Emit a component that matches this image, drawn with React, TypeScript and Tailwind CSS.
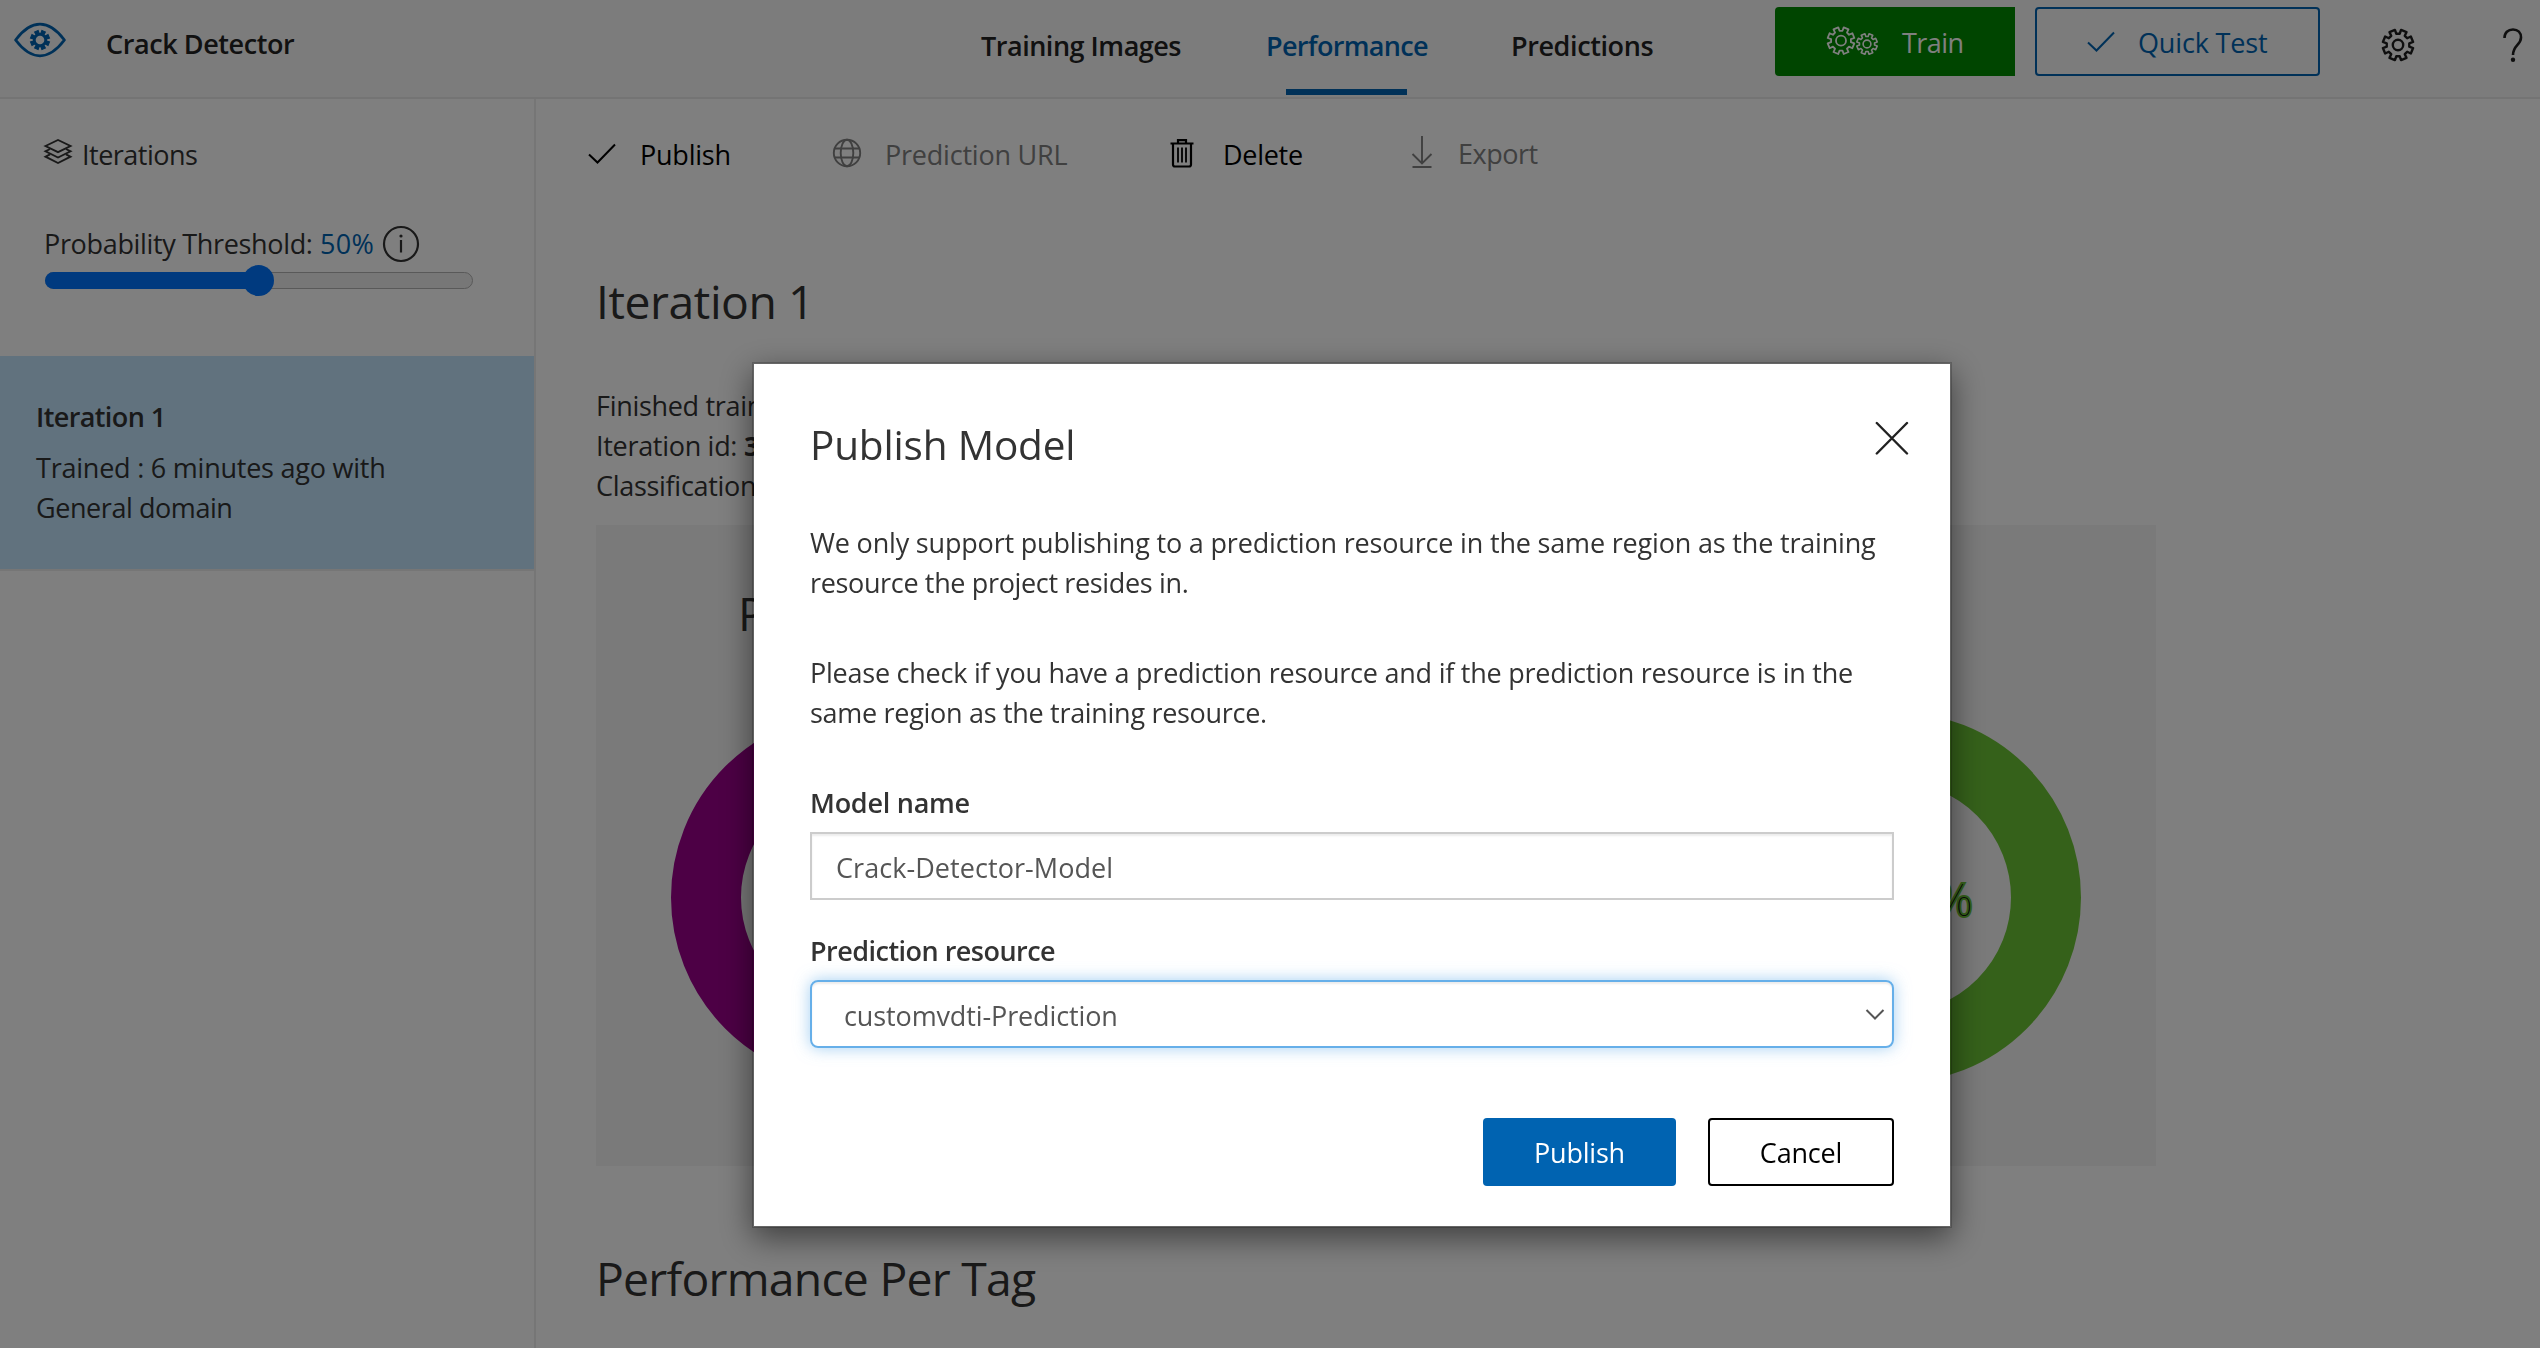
import React from "react";

/** Outline of an eight-toothed gear centred on (cx, cy), with a notch at the top. */
function gearPath(cx: number, cy: number, outer: number, inner: number) {
  const points: string[] = [];
  for (let i = 0; i < 8; i++) {
    const mid = i * 45 + 22.5;
    const corners: [number, number][] = [
      [mid - 14, inner],
      [mid - 11, outer],
      [mid + 11, outer],
      [mid + 14, inner],
    ];
    corners.forEach(([deg, r]) => {
      const a = (deg * Math.PI) / 180;
      points.push(`${(cx + r * Math.sin(a)).toFixed(2)} ${(cy - r * Math.cos(a)).toFixed(2)}`);
    });
  }
  return `M${points.join("L")}Z`;
}

function EyeLogo() {
  return (
    <svg width="52" height="36" viewBox="0 0 52 36" fill="none" stroke="#0063b1">
      <path d="M1.600 18C8 9.500 16 2.200 26 2.200S44 9.500 50.400 18C44 26.500 36 33.800 26 33.800S8 26.500 1.600 18Z" strokeWidth="2.800" strokeLinejoin="round" />
      <path d={gearPath(26, 18, 9.6, 6.6)} strokeWidth="1.200" fill="#0063b1" />
      <circle cx="26" cy="18" r="4.300" fill="#f8f8f8" stroke="none" />
    </svg>
  );
}

function GearsIcon() {
  return (
    <svg width="54" height="30" viewBox="0 0 54 30" fill="none" stroke="#fff" strokeWidth="1.800" strokeLinejoin="round">
      <path d={gearPath(15, 14.7, 13.6, 10)} />
      <circle cx="15" cy="14.700" r="5" />
      <path d={gearPath(41, 18, 10.4, 7.6)} strokeWidth="1.600" />
      <circle cx="41" cy="18" r="3.900" strokeWidth="1.600" />
    </svg>
  );
}

function GearIcon() {
  return (
    <svg width="34" height="34" viewBox="0 0 34 34" fill="none" stroke="#1f1f1f" strokeWidth="2.400" strokeLinejoin="round">
      <path d={gearPath(17, 17, 15.4, 11.4)} />
      <circle cx="17" cy="17" r="5.200" />
    </svg>
  );
}

function HelpIcon() {
  return (
    <svg width="22" height="36" viewBox="0 0 22 36" fill="none" stroke="#1f1f1f" strokeWidth="2.600">
      <path d="M2.500 11C2.500 5.500 6 2.500 11 2.500S19 5.500 19 10.500C19 18 11 18 11 28" />
      <circle cx="11" cy="32.800" r="2.200" fill="#1f1f1f" stroke="none" />
    </svg>
  );
}

function CheckIcon({ color }: { color: string }) {
  return (
    <svg width="30" height="22" viewBox="0 0 30 22" fill="none" stroke={color} strokeWidth="2">
      <path d="M2 11.500L10.500 19.500L28 1.500" />
    </svg>
  );
}

function LayersIcon() {
  return (
    <svg width="30" height="28" viewBox="0 0 30 28" fill="none" stroke="#333" strokeWidth="1.900">
      <path d="M2.500 8L15 2L27.500 8L15 14.200Z" />
      <path d="M7 11L2.500 13.300L15 19.500L27.500 13.300L23 11" />
      <path d="M7 16.300L2.500 18.700L15 25L27.500 18.700L23 16.300" />
    </svg>
  );
}

function InfoIcon() {
  return (
    <svg width="38" height="38" viewBox="0 0 38 38" fill="none" stroke="#333" strokeWidth="2.200">
      <circle cx="19" cy="19" r="17" />
      <path d="M19 15V27.500" />
      <circle cx="19" cy="11" r="1.600" fill="#333" stroke="none" />
    </svg>
  );
}

function GlobeIcon() {
  return (
    <svg width="30" height="30" viewBox="0 0 30 30" fill="none" stroke="#808080" strokeWidth="1.900">
      <circle cx="15" cy="15" r="13.200" />
      <ellipse cx="15" cy="15" rx="6.300" ry="13.200" />
      <path d="M3 10.500H27M3 19.500H27" />
    </svg>
  );
}

function TrashIcon() {
  return (
    <svg width="24" height="30" viewBox="0 0 24 30" fill="none" stroke="#000" strokeWidth="2.200">
      <path d="M0.500 5.500H23.500M8 5.500V2.200H16V5.500" />
      <path d="M3 5.500V26.500Q3 28.500 5 28.500H19Q21 28.500 21 26.500V5.500" />
      <path d="M8 9.500V24.500M12 9.500V24.500M16 9.500V24.500" strokeWidth="1.800" />
    </svg>
  );
}

function DownloadIcon() {
  return (
    <svg width="22" height="34" viewBox="0 0 22 34" fill="none" stroke="#808080" strokeWidth="1.900">
      <path d="M11 1V28M1.500 19L11 28.500L20.500 19M1.500 32H20.500" />
    </svg>
  );
}

function Donut({ color, value }: { color: string; value: string }) {
  return (
    <div className="relative flex h-[371px] w-[371px] items-center justify-center">
      <svg className="absolute inset-0" width="371" height="371" viewBox="0 0 371 371" fill="none">
        <circle cx="185.500" cy="185.500" r="150.500" stroke={color} strokeWidth="70" />
      </svg>
      <svg className="relative" width="220" height="70" viewBox="0 0 220 70">
        <text x="110" y="54" textAnchor="middle" className="font-['Open_Sans'] text-[47px] tracking-[-1px]" fill="#111" stroke={color} strokeWidth="1.800">
          {value}
        </text>
      </svg>
    </div>
  );
}

function Header() {
  return (
    <header className="flex h-[99px] shrink-0 items-start border-b-2 border-[#e8e8e8] bg-[#f8f8f8] font-semibold text-[#222]">
      <div className="ml-[14px] mt-[22px]">
        <EyeLogo />
      </div>
      <div className="ml-[40px] mt-[24px] w-[875px] tracking-[-0.42px]">Crack Detector</div>
      <nav className="flex pt-[26px]">
        <div className="w-[285px] tracking-[-0.48px]">Training Images</div>
        <div className="flex w-[245px] flex-col items-start text-[#0063b1]">
          <span className="tracking-[-0.66px]">Performance</span>
          <span className="ml-[20px] mt-[23px] h-[6px] w-[121px] bg-[#0063b1]" />
        </div>
        <div className="w-[264px] tracking-[-0.4px]">Predictions</div>
      </nav>
      <button className="mt-[7px] flex h-[69px] w-[240px] items-start rounded-l-[4px] bg-[#008a00] text-white">
        <span className="ml-[51px] mt-[19px]">
          <GearsIcon />
        </span>
        <span className="ml-[22px] mt-[16px] font-medium tracking-[-0.56px]">Train</span>
      </button>
      <button className="ml-[20px] mt-[7px] flex h-[69px] w-[285px] items-start rounded-[4px] border-2 border-[#0063b1] text-[#0063b1]">
        <span className="ml-[49px] mt-[22px]">
          <CheckIcon color="#0063b1" />
        </span>
        <span className="ml-[22px] mt-[14px] font-normal tracking-[-0.16px]">Quick Test</span>
      </button>
      <span className="ml-[61px] mt-[28px]">
        <GearIcon />
      </span>
      <span className="ml-[87px] mt-[27px]">
        <HelpIcon />
      </span>
    </header>
  );
}

function Sidebar() {
  return (
    <aside className="flex w-[536px] shrink-0 flex-col border-r-2 border-[#ececec]">
      <div className="ml-[43px] mt-[36px] flex h-[40px] items-start">
        <span className="mt-[3px]">
          <LayersIcon />
        </span>
        <span className="ml-[9px] tracking-[-0.5px]">Iterations</span>
      </div>
      <div className="ml-[44px] mt-[49px] flex h-[40px] items-start whitespace-pre">
        <span className="w-[276px] tracking-[-0.33px]">Probability Threshold:</span>
        <span className="w-[62px] tracking-[0.3px] text-[#0063b1]">50%</span>
        <span className="mt-[1px]">
          <InfoIcon />
        </span>
      </div>
      <div className="ml-[45px] flex h-[32px] w-[428px] items-center">
        <div className="relative flex h-[17px] w-full items-center rounded-full border border-[#b2b2b2] bg-[#efefef]">
          <div className="-ml-px h-[17px] w-1/2 rounded-l-full bg-[#0075ff]" />
          <div className="-ml-[15px] size-[31px] rounded-full bg-[#0075ff]" />
        </div>
      </div>
      <div className="mt-[60px] flex h-[215px] flex-col border-b-2 border-[#ececec] bg-[#c2e4fc] pl-[36px] pt-[41px]">
        <div className="font-semibold tracking-[-0.6px]">Iteration 1</div>
        <div className="mt-[11px] tracking-[-0.23px]">Trained : 6 minutes ago with</div>
        <div className="tracking-[-0.43px]">General domain</div>
      </div>
    </aside>
  );
}

function Content() {
  return (
    <main className="flex flex-1 flex-col pl-[60px]">
      <div className="-ml-[9px] mt-[36px] flex h-[40px] w-full items-start">
        <span className="mt-[8px]">
          <CheckIcon color="#000" />
        </span>
        <span className="ml-[23px] w-[192px] tracking-[-0.23px] text-black">Publish</span>
        <span className="mt-[3px]">
          <GlobeIcon />
        </span>
        <span className="ml-[23px] w-[285px] tracking-[-0.22px] text-[#808080]">Prediction URL</span>
        <span className="mt-[3px]">
          <TrashIcon />
        </span>
        <span className="ml-[29px] w-[188px] tracking-[-0.28px] text-black">Delete</span>
        <DownloadIcon />
        <span className="-mt-px ml-[25px] tracking-[-0.5px] text-[#808080]">Export</span>
      </div>
      <h1 className="mt-[93px] text-[46.3px] leading-[68px] tracking-[-0.45px]">Iteration 1</h1>
      <div className="mt-[50px] tracking-[-0.3px]">
        <div>Finished training</div>
        <div>
          Iteration id: <span className="font-bold">3</span>
        </div>
        <div>Classification type</div>
      </div>
      <section className="mt-[19px] flex h-[641px] w-[1560px] flex-col bg-[#f4f4f4]">
        <h2 className="ml-[142px] mt-[55px] text-[46.3px] leading-[68px]">Precision</h2>
        <div className="ml-[75px] mt-[64px] flex gap-[668px]">
          <Donut color="#9b008b" value="100.0%" />
          <Donut color="#6bc335" value="100.0%" />
        </div>
      </section>
      <h2 className="mt-[79px] text-[46.3px] leading-[68px] tracking-[-0.74px]">Performance Per Tag</h2>
    </main>
  );
}

function PublishDialog() {
  return (
    <div className="fixed inset-0 flex items-start justify-center bg-black/50 pl-[164px]">
      <div className="mt-[362px] flex h-[866px] w-[1200px] flex-col border-2 border-black/20 bg-white bg-clip-padding px-[56px] shadow-[0_10px_30px_rgba(0,0,0,0.5)]">
        <div className="mt-[51px] flex items-start justify-between">
          <h2 className="text-[40.5px] leading-[60px] tracking-[-0.18px]">Publish Model</h2>
          <button className="mr-[-15px] pt-[6px]">
            <svg width="34" height="34" viewBox="0 0 34 34" fill="none" stroke="#222" strokeWidth="2.400" strokeLinecap="round">
              <path d="M1.800 2L32 32.500M32 2L1.800 32.500" />
            </svg>
          </button>
        </div>
        <p className="mt-[48px] whitespace-nowrap">
          <span className="block tracking-[-0.18px]">We only support publishing to a prediction resource in the same region as the training</span>
          <span className="block tracking-[-0.35px]">resource the project resides in.</span>
        </p>
        <p className="mt-[50px] whitespace-nowrap">
          <span className="block tracking-[-0.24px]">Please check if you have a prediction resource and if the prediction resource is in the</span>
          <span className="block tracking-[-0.3px]">same region as the training resource.</span>
        </p>
        <label className="mt-[50px] font-semibold tracking-[-0.25px]">Model name</label>
        <div className="mt-[9px] h-[68px] border-2 border-[#ccc] pl-[24px] pt-[14px] tracking-[0.06px] text-[#555] shadow-[inset_0_2px_2px_rgba(0,0,0,0.075)]">
          Crack-Detector-Model
        </div>
        <label className="mt-[31px] font-semibold tracking-[-0.52px]">Prediction resource</label>
        <div className="mt-[9px] flex h-[68px] items-start justify-between rounded-[8px] border-2 border-[#66afe9] pl-[32px] pr-[7px] pt-[14px] tracking-[-0.12px] text-[#555] shadow-[inset_0_2px_2px_rgba(0,0,0,0.075),0_0_16px_rgba(102,175,233,0.6)]">
          customvdti-Prediction
          <svg className="mt-[12px]" width="20" height="14" viewBox="0 0 20 14" fill="none" stroke="#555" strokeWidth="2">
            <path d="M1.500 2L10 10.500L18.500 2" />
          </svg>
        </div>
        <div className="mt-[70px] flex justify-end gap-[32px]">
          <button className="h-[68px] w-[193px] rounded-[4px] bg-[#0063b1] pt-px tracking-[-0.23px] text-white">Publish</button>
          <button className="h-[68px] w-[186px] rounded-[4px] border-2 border-black pt-px tracking-[-0.2px] text-black">Cancel</button>
        </div>
      </div>
    </div>
  );
}

export default function App() {
  return (
    <div className="flex h-[1348px] w-[2540px] flex-col overflow-hidden bg-white font-['Open_Sans',sans-serif] text-[27px] leading-[40px] text-[#333]">
      <Header />
      <div className="flex min-h-0 flex-1">
        <Sidebar />
        <Content />
      </div>
      <PublishDialog />
    </div>
  );
}
